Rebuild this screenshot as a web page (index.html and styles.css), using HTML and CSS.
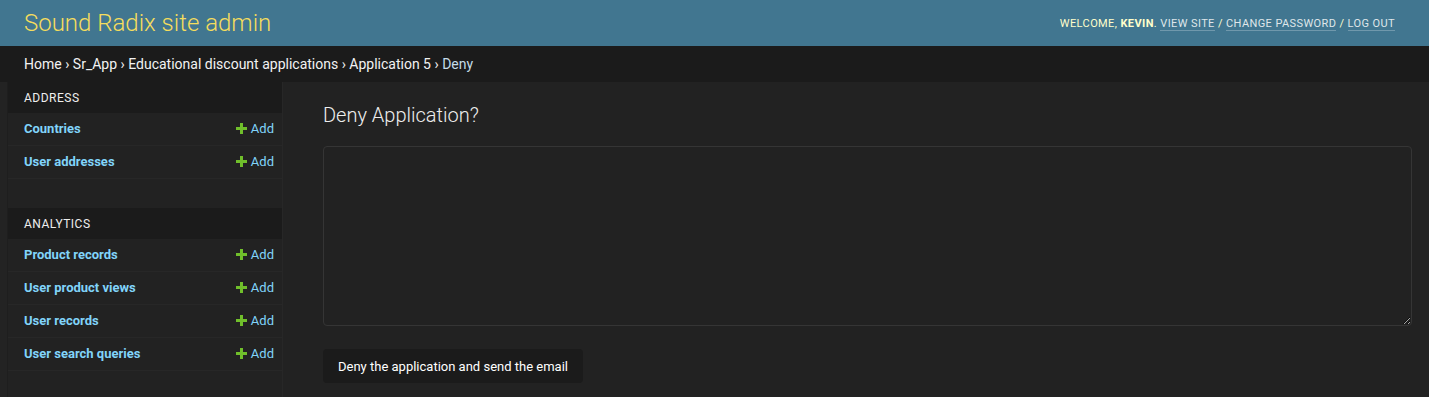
FILE: index.html
```html
<!DOCTYPE html>
<html lang="en">
<head>
  <meta charset="UTF-8" />
  <title>Deny Application | Sound Radix site admin</title>
  <meta name="viewport" content="width=device-width, initial-scale=1" />
  <link rel="stylesheet" href="styles.css">
</head>
<body>
  <div id="header">
    <div class="branding">
      <h1 class="site-name"><a href="#">Sound Radix site admin</a></h1>
    </div>
    <div class="user-tools">
      Welcome, <strong>kevin</strong>.
      <a href="#">View site</a> /
      <a href="#">Change password</a> /
      <a href="#">Log out</a>
    </div>
  </div>

  <div class="breadcrumbs">
    <a href="#">Home</a> &rsaquo;
    <a href="#">Sr_App</a> &rsaquo;
    <a href="#">Educational discount applications</a> &rsaquo;
    <a href="#">Application 5</a> &rsaquo;
    <span class="current">Deny</span>
  </div>

  <div class="main">
    <div class="toggle-strip"></div>
    <nav class="nav-sidebar">
      <div class="module">
        <div class="caption">Address</div>
        <div class="row"><a class="model" href="#">Countries</a><a class="addlink" href="#"><span class="plus"></span>Add</a></div>
        <div class="row"><a class="model" href="#">User addresses</a><a class="addlink" href="#"><span class="plus"></span>Add</a></div>
      </div>
      <div class="module">
        <div class="caption">Analytics</div>
        <div class="row"><a class="model" href="#">Product records</a><a class="addlink" href="#"><span class="plus"></span>Add</a></div>
        <div class="row"><a class="model" href="#">User product views</a><a class="addlink" href="#"><span class="plus"></span>Add</a></div>
        <div class="row"><a class="model" href="#">User records</a><a class="addlink" href="#"><span class="plus"></span>Add</a></div>
        <div class="row"><a class="model" href="#">User search queries</a><a class="addlink" href="#"><span class="plus"></span>Add</a></div>
      </div>
    </nav>

    <div class="content">
      <h1>Deny Application?</h1>
      <form>
        <textarea name="reason" rows="10"></textarea>
        <button type="submit" class="deny-btn">Deny the application and send the email</button>
      </form>
    </div>
  </div>
</body>
</html>
```

FILE: styles.css
```css
body {
  margin: 0;
  padding: 0;
  background: #222222;
  color: #eeeeee;
  font-family: Roboto, "Liberation Sans", sans-serif;
  font-size: 14px;
}

a {
  text-decoration: none;
}

#header {
  display: flex;
  justify-content: space-between;
  align-items: center;
  height: 46px;
  padding: 0 34px 0 24px;
  background: #417690;
  box-sizing: border-box;
}

.site-name {
  margin: 0;
  font-size: 24px;
  font-weight: 300;
  line-height: 26px;
}

.site-name a {
  color: #f5dd5d;
}

.user-tools {
  font-size: 11px;
  letter-spacing: 0.4px;
  text-transform: uppercase;
  color: #ffffcc;
}

.user-tools strong {
  font-weight: 700;
}

.user-tools a {
  color: #dfe6ea;
  border-bottom: 1px solid rgba(255, 255, 255, 0.25);
}

.breadcrumbs {
  height: 36px;
  box-sizing: border-box;
  padding: 10px 24px;
  background: #1b1b1b;
  color: #eeeeee;
  font-size: 14px;
  line-height: 16px;
}

.breadcrumbs a {
  color: #f2f2f2;
}

.breadcrumbs .current {
  color: #c4dce8;
}

.main {
  display: flex;
  min-height: 315px;
}

.toggle-strip {
  flex: 0 0 8px;
  background: #232323;
  border-right: 1px solid #1e1e1e;
  box-sizing: border-box;
}

.nav-sidebar {
  flex: 0 0 275px;
  border-right: 1px solid #272727;
  box-sizing: border-box;
}

.module {
  margin-bottom: 29px;
}

.caption {
  height: 31px;
  box-sizing: border-box;
  padding: 9px 16px 7px;
  background: #1b1b1b;
  color: #eeeeee;
  font-size: 12px;
  line-height: 15px;
  letter-spacing: 0.5px;
  text-transform: uppercase;
}

.row {
  display: flex;
  justify-content: space-between;
  align-items: center;
  height: 33px;
  box-sizing: border-box;
  padding: 0 8px 2px 16px;
  border-bottom: 1px solid #272727;
  font-size: 13px;
}

.row .model {
  color: #81d4fa;
  font-weight: 700;
}

.addlink {
  display: flex;
  align-items: center;
  color: #81d4fa;
}

.plus {
  position: relative;
  width: 11px;
  height: 11px;
  margin-right: 4px;
}

.plus::before,
.plus::after {
  content: "";
  position: absolute;
  background: #70bf2b;
}

.plus::before {
  left: 4px;
  top: 0;
  width: 3px;
  height: 11px;
}

.plus::after {
  left: 0;
  top: 4px;
  width: 11px;
  height: 3px;
}

.content {
  flex: 1;
  padding: 20px 40px;
}

.content h1 {
  margin: 1px 0 19px;
  font-size: 20px;
  font-weight: 300;
  line-height: 24px;
  color: #eeeeee;
}

.content textarea {
  display: block;
  width: 100%;
  height: 158px;
  padding: 10px 11px 10px 10px;
  margin: 0;
  background: #222222;
  border: 1px solid #353535;
  border-radius: 4px;
  color: #eeeeee;
  font-family: inherit;
  font-size: 13px;
  box-sizing: content-box;
}

.deny-btn {
  margin-top: 23px;
  height: 34px;
  padding: 0 15px;
  background: #1b1b1b;
  color: #ffffff;
  border: none;
  border-radius: 4px;
  font-family: inherit;
  font-size: 13px;
  cursor: pointer;
}
```
